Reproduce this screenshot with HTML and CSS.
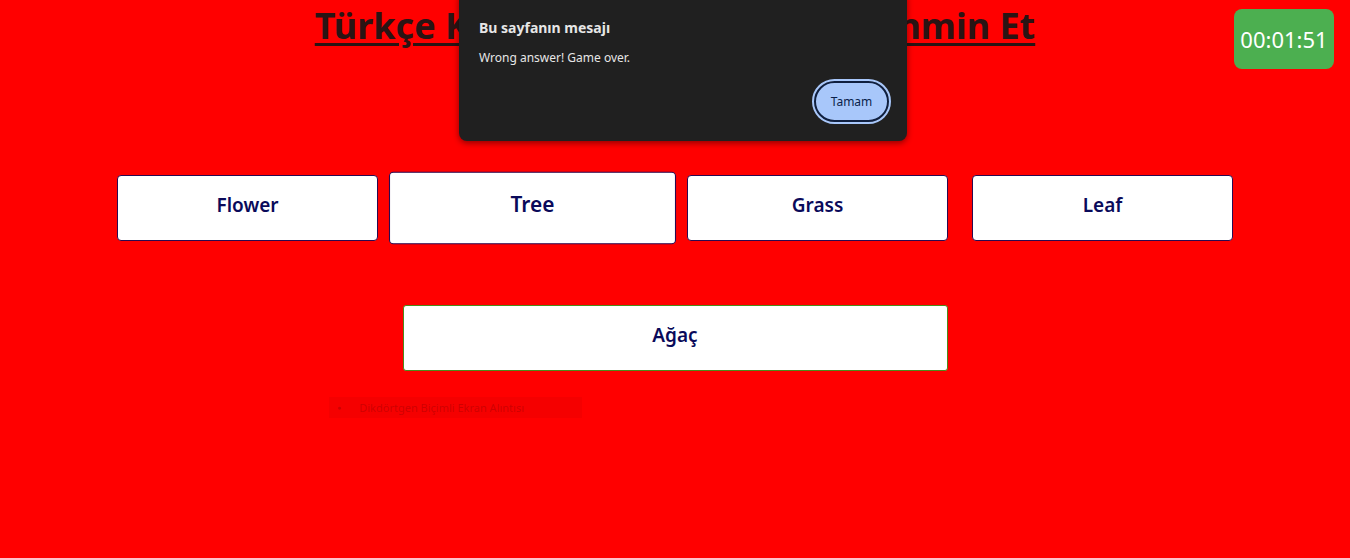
FILE: index.html
```html
<!DOCTYPE html>
<html lang="tr">
<head>
<meta charset="utf-8">
<title>Kelime Tahmin</title>
<link rel="stylesheet" href="styles.css">
</head>
<body>
<main class="game">
  <h1 class="title">Türkçe Kelimenin İngilizcesini Tahmin Et</h1>
  <div class="options">
    <button class="option">Flower</button>
    <button class="option option-hover">Tree</button>
    <button class="option">Grass</button>
    <button class="option">Leaf</button>
  </div>
  <div class="word">Ağaç</div>
</main>
<div class="timer">00:01:51</div>
<div class="ghost"><span class="ghost-dot">●</span><span>Dikdörtgen Biçimli Ekran Alıntısı</span></div>
<div class="dialog">
  <div class="dialog-title">Bu sayfanın mesajı</div>
  <div class="dialog-msg">Wrong answer! Game over.</div>
  <div class="dialog-actions"><button class="dialog-btn">Tamam</button></div>
</div>
</body>
</html>
```

FILE: styles.css
```css
html, body {
  margin: 0;
  padding: 0;
  height: 100%;
}
body {
  background: #ff0000;
  font-family: "Noto Sans", "Open Sans", sans-serif;
  overflow: hidden;
}
.game {
  display: flex;
  flex-direction: column;
  align-items: center;
}
.title {
  margin: 0;
  padding-top: 2px;
  font-size: 36px;
  font-weight: 700;
  line-height: 48px;
  color: #2a1414;
  text-decoration: underline;
  text-decoration-thickness: 3px;
  text-underline-offset: 4px;
}
.options {
  display: flex;
  gap: 24px;
  margin-top: 125px;
}
.option {
  width: 261px;
  height: 66px;
  background: #fff;
  border: 1px solid #2a0a50;
  border-radius: 4px;
  font-family: inherit;
  font-size: 19px;
  font-weight: 600;
  color: #0a0a5a;
  padding: 0 0 6px 0;
  margin: 0;
}
.option-hover {
  transform: scale(1.1);
}
.word {
  margin-top: 64px;
  width: 545px;
  height: 66px;
  box-sizing: border-box;
  background: #fff;
  border: 1px solid #4d8a1a;
  border-radius: 3px;
  display: flex;
  align-items: center;
  justify-content: center;
  padding-bottom: 6px;
  font-size: 19px;
  font-weight: 600;
  color: #0a0a5a;
}
.timer {
  position: absolute;
  top: 9px;
  right: 16px;
  width: 100px;
  height: 60px;
  border-radius: 8px;
  background: #4caf50;
  color: #fff;
  font-size: 22px;
  display: flex;
  align-items: center;
  justify-content: center;
}
.ghost {
  position: absolute;
  left: 329px;
  top: 397px;
  width: 253px;
  height: 21px;
  background: rgba(200, 0, 0, 0.18);
  color: rgba(160, 0, 0, 0.45);
  font-size: 11px;
  display: flex;
  align-items: center;
  gap: 18px;
  padding-left: 8px;
  box-sizing: border-box;
}
.ghost-dot {
  font-size: 7px;
}
.dialog {
  position: absolute;
  left: 459px;
  top: -10px;
  width: 448px;
  height: 151px;
  box-sizing: border-box;
  background: #202020;
  border-radius: 8px;
  box-shadow: 0 2px 6px rgba(0, 0, 0, 0.45);
  padding: 28px 20px 16px 20px;
  color: #e6e6e6;
}
.dialog-title {
  font-size: 14px;
  font-weight: 700;
  line-height: 20px;
}
.dialog-msg {
  margin-top: 12px;
  font-size: 12px;
  line-height: 16px;
}
.dialog-actions {
  display: flex;
  justify-content: flex-end;
  margin-top: 15px;
}
.dialog-btn {
  width: 75px;
  height: 41px;
  border-radius: 21px;
  background: #a8c7fa;
  border: 2px solid #0f1f3f;
  outline: 2px solid #a8c7fa;
  outline-offset: 0;
  color: #0a1f4a;
  font-family: inherit;
  font-size: 12px;
  margin-right: -2px;
}
```
